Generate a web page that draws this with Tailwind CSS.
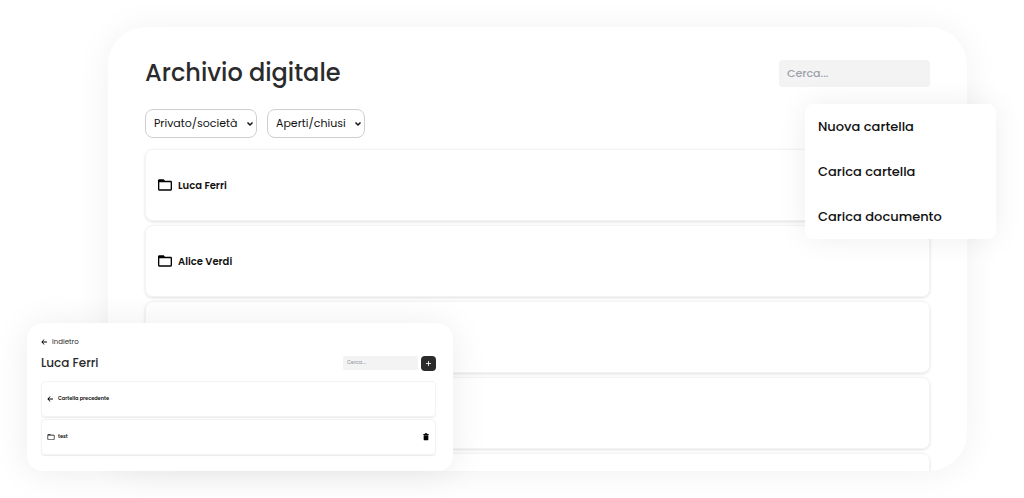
<!doctype html>
<html lang="it">

<head>
    <meta charset="UTF-8">
    <meta name="viewport" content="width=device-width, initial-scale=1.0">
    <title>Archivio digitale</title>
    <script src="https://cdn.jsdelivr.net/npm/@tailwindcss/browser@4"></script>
</head>

<body class="bg-white font-[Poppins,Inter,sans-serif] text-[#111111]">
    <svg class="hidden">
        <symbol id="folder" viewBox="0 0 24 24">
            <path d="M20.500 5.500H12l-2-2H3.500C2.400 3.500 1.500 4.400 1.500 5.500v13c0 1.100.9 2 2 2h17c1.100 0 2-.9 2-2v-11c0-1.100-.9-2-2-2zm0 13h-17v-10.800h17z" />
        </symbol>
        <symbol id="back" viewBox="3 3 18 18">
            <path d="M21 10.800H8.200l5.200-5.200L12 4l-8 8 8 8 1.400-1.600-5.200-5.200H21z" />
        </symbol>
        <symbol id="chevron" viewBox="0 0 8 6">
            <path d="M1.500 1.500L4 4l2.500-2.500" fill="none" stroke="#111111" stroke-width="1.500" />
        </symbol>
    </svg>

    <div class="relative h-screen overflow-hidden pt-[27px] pb-[27px] pl-[108px] pr-[57px]">
        <!-- archive -->
        <main class="h-full overflow-hidden rounded-[38px] bg-white pt-7 pr-[37px] pl-[37px] shadow-[0_2px_36px_rgba(0,0,0,0.06)]">
            <header class="flex h-9 items-center justify-between">
                <h1 class="text-2xl font-medium text-[#2b2b2b]">Archivio digitale</h1>
                <input type="search" placeholder="Cerca..." aria-label="Cerca"
                    class="h-[27px] w-[151px] rounded bg-[#f3f3f3] px-2 text-[11px] font-medium outline-none placeholder:text-[#9ca0aa]">
            </header>
            <div class="mt-[18px] flex gap-[10px]">
                <div class="relative">
                    <select aria-label="Tipo" class="h-[29px] w-28 appearance-none rounded-lg border border-[#cfcfcf] bg-white pl-2 text-[11px]">
                        <option>Privato/società</option>
                    </select>
                    <svg class="pointer-events-none absolute top-3 right-[3px] h-[6px] w-2"><use href="#chevron" /></svg>
                </div>
                <div class="relative">
                    <select aria-label="Stato" class="h-[29px] w-[98px] appearance-none rounded-lg border border-[#cfcfcf] bg-white pl-2 text-[11px]">
                        <option>Aperti/chiusi</option>
                    </select>
                    <svg class="pointer-events-none absolute top-3 right-[3px] h-[6px] w-2"><use href="#chevron" /></svg>
                </div>
            </div>
            <ul class="mt-[11px] flex flex-col gap-1 text-[10px] font-semibold">
                <li class="flex h-[72px] shrink-0 items-center gap-[5px] rounded-lg border border-[#f3f3f3] px-[11px] shadow-[0_1px_3px_rgba(0,0,0,0.12)]">
                    <svg class="size-4 fill-black"><use href="#folder" /></svg>
                    Luca Ferri
                </li>
                <li class="flex h-[72px] shrink-0 items-center gap-[5px] rounded-lg border border-[#f3f3f3] px-[11px] shadow-[0_1px_3px_rgba(0,0,0,0.12)]">
                    <svg class="size-4 fill-black"><use href="#folder" /></svg>
                    Alice Verdi
                </li>
                <li class="h-[72px] shrink-0 rounded-lg border border-[#f3f3f3] shadow-[0_1px_3px_rgba(0,0,0,0.12)]"></li>
                <li class="h-[72px] shrink-0 rounded-lg border border-[#f3f3f3] shadow-[0_1px_3px_rgba(0,0,0,0.12)]"></li>
                <li class="h-[72px] shrink-0 rounded-lg border border-[#f3f3f3] shadow-[0_1px_3px_rgba(0,0,0,0.12)]"></li>
            </ul>
        </main>

        <!-- add menu -->
        <div class="absolute top-[104px] right-7 flex w-[191px] flex-col rounded-lg bg-white text-[13px] font-medium shadow-[0_0_30px_rgba(0,0,0,0.07)]">
            <button class="h-[45px] px-[13px] text-left">Nuova cartella</button>
            <button class="h-[45px] px-[13px] text-left">Carica cartella</button>
            <button class="h-[45px] px-[13px] text-left">Carica documento</button>
        </div>

        <!-- open folder -->
        <section class="absolute bottom-[27px] left-[27px] h-[148px] w-[426px] rounded-2xl bg-white pt-[14px] pr-[17px] pl-[14px] shadow-[0_2px_36px_rgba(0,0,0,0.08)]">
            <a href="#" class="flex h-[10px] items-center gap-[5px] text-[7px] text-[#2b2b2b]">
                <svg class="size-[6px] fill-black"><use href="#back" /></svg>
                Indietro
            </a>
            <div class="mt-2 flex h-4 items-center gap-[3px]">
                <h2 class="mr-auto text-xs font-medium text-[#2b2b2b]">Luca Ferri</h2>
                <input type="search" placeholder="Cerca..." aria-label="Cerca nella cartella"
                    class="h-[14px] w-[75px] rounded-xs bg-[#f3f3f3] px-1 text-[5px] font-medium outline-none placeholder:text-[#9ca0aa]">
                <button aria-label="Aggiungi" class="flex size-[15px] items-center justify-center rounded bg-[#2b2b2b]">
                    <svg class="size-[5px] stroke-white stroke-2" viewBox="0 0 12 12"><path d="M6 0v12M0 6h12" /></svg>
                </button>
            </div>
            <ul class="mt-[10px] flex flex-col gap-[2px] text-[5px] font-semibold">
                <li class="flex h-9 items-center gap-[5px] rounded border border-[#f3f3f3] px-[5px] shadow-[0_1px_1px_rgba(0,0,0,0.08)]">
                    <svg class="size-[6px] fill-black"><use href="#back" /></svg>
                    Cartella precedente
                </li>
                <li class="flex h-9 items-center gap-[3px] rounded border border-[#f3f3f3] px-[5px] shadow-[0_1px_1px_rgba(0,0,0,0.08)]">
                    <svg class="size-2 fill-black"><use href="#folder" /></svg>
                    test
                    <button aria-label="Elimina" class="ml-auto">
                        <svg class="size-2 fill-black" viewBox="0 0 24 24"><path d="M5 7h14v13c0 1-1 2-2 2H7c-1 0-2-1-2-2zM4 3h4l1-2h6l1 2h4v3H4z" /></svg>
                    </button>
                </li>
            </ul>
        </section>
    </div>
</body>

</html>
